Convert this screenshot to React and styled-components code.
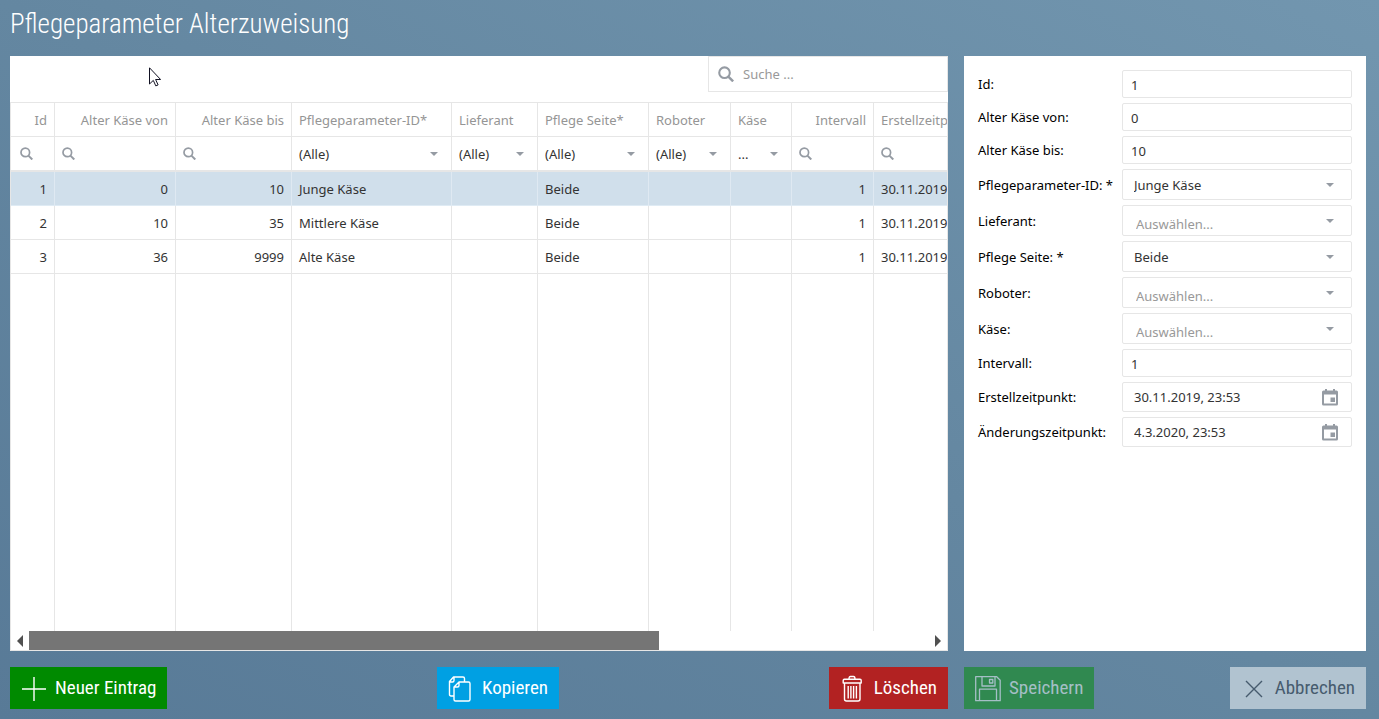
import React from 'react';
import styled, { createGlobalStyle, css } from 'styled-components';

const GlobalStyle = createGlobalStyle`
  *, *::before, *::after { box-sizing: border-box; }
  html, body { margin: 0; }
  body {
    font-family: 'Noto Sans', 'Open Sans', sans-serif;
    font-size: 13px;
    line-height: 18px;
    color: #333;
  }
  button, input, select { font: inherit; color: inherit; margin: 0; }
`;

const condensed = css`
  font-family: 'Roboto Condensed', 'Liberation Sans Narrow', Roboto, sans-serif;
`;

const Page = styled.div`
  min-height: 100vh;
  display: flex;
  flex-direction: column;
  padding: 0 13px 10px 10px;
  background: linear-gradient(to top right, #587a97, #6487a1 50%, #7296af);
`;

const Title = styled.h1`
  ${condensed}
  margin: 0;
  height: 56px;
  padding-top: 8px;
  font-size: 27px;
  line-height: 32px;
  font-weight: 300;
  color: #fff;
`;

const Columns = styled.main`
  flex: 1;
  display: grid;
  grid-template-columns: minmax(0, 7fr) minmax(0, 3fr);
  grid-template-rows: 1fr 42px;
  gap: 16px;
`;

const Panel = styled.section`
  background: #fff;
  display: flex;
  flex-direction: column;
  min-width: 0;
`;

const Toolbar = styled.div`
  height: 46px;
  display: flex;
  justify-content: flex-end;
  align-items: flex-start;
`;

const SearchBox = styled.label`
  display: flex;
  align-items: center;
  gap: 9px;
  width: 240px;
  height: 36px;
  padding: 0 9px;
  border: 1px solid #e6e6e6;
  color: #959ba3;
`;

const PlainInput = styled.input`
  flex: 1;
  min-width: 0;
  width: 100%;
  border: 0;
  padding: 0;
  outline: 0;
  background: transparent;
  &::placeholder { color: #999; opacity: 1; }
`;

const GridBox = styled.div`
  flex: 1;
  display: flex;
  flex-direction: column;
  border: 1px solid #e6e6e6;
`;

const TableClip = styled.div`
  flex: 1;
  display: grid;
  overflow: hidden;
`;

const Table = styled.table`
  width: 100%;
  height: 100%;
  table-layout: fixed;
  border-collapse: separate;
  border-spacing: 0;
`;

const Col = styled.col`
  width: ${(p) => (p.$w ? `${p.$w}px` : 'auto')};
`;

const Th = styled.th`
  height: 34px;
  padding: 0 7px;
  border-right: 1px solid #e6e6e6;
  border-bottom: 1px solid #e6e6e6;
  font-weight: 400;
  color: #959595;
  text-align: ${(p) => (p.$right ? 'right' : 'left')};
  white-space: nowrap;
  overflow: hidden;
  &:last-child { border-right: 0; }
`;

const FilterTd = styled.td`
  height: 35px;
  padding: 0 7px;
  border-right: 1px solid #e6e6e6;
  border-bottom: 2px solid #e6e6e6;
  &:first-child { padding-left: 9px; }
  &:last-child { border-right: 0; }
`;

const FilterBox = styled.div`
  display: flex;
  align-items: center;
  position: relative;
  color: #959ba3;
`;

const FilterSelect = styled.select`
  appearance: none;
  width: 100%;
  padding: 0 22px 0 0;
  border: 0;
  outline: 0;
  background: transparent;
  color: #333;
  text-overflow: ellipsis;
`;

const Td = styled.td`
  height: 34px;
  padding: 0 7px;
  border-right: 1px solid ${(p) => (p.$selected ? '#dfe9f2' : '#e6e6e6')};
  border-bottom: 1px solid ${(p) => (p.$selected ? '#dfebf4' : '#e6e6e6')};
  background: ${(p) => (p.$selected ? '#d0dfeb' : '#fff')};
  text-align: ${(p) => (p.$right ? 'right' : 'left')};
  white-space: nowrap;
  overflow: hidden;
  &:last-child { border-right: 0; }
`;

const FillTd = styled.td`
  padding: 0;
  border-right: 1px solid #e6e6e6;
  &:last-child { border-right: 0; }
`;

const Scrollbar = styled.div`
  display: flex;
  height: 19px;
  background: #fff;
`;

const ScrollArrow = styled.button`
  width: 18px;
  padding: 0;
  border: 0;
  background: transparent;
  color: #505050;
  display: flex;
  align-items: center;
  justify-content: center;
`;

const ScrollTrack = styled.div`
  flex: 1;
`;

const ScrollThumb = styled.div`
  width: 70%;
  height: 100%;
  background: #757575;
`;

const Form = styled.form`
  display: grid;
  grid-template-columns: 144px minmax(0, 1fr);
  row-gap: 5px;
  align-items: center;
  padding: 14px;
  color: #000;
`;

const Label = styled.label`
  white-space: nowrap;
`;

const TextField = styled.input`
  width: 100%;
  height: ${(p) => (p.$date ? 30 : 28)}px;
  padding: ${(p) => (p.$date ? '0 11px' : '2px 8px 0')};
  border: 1px solid #e6e6e6;
  border-radius: 2px;
  background: #fff;
  color: #333;
  outline: 0;
`;

const FieldWrap = styled.div`
  position: relative;
  display: flex;
`;

const SelectField = styled.select`
  appearance: none;
  width: 100%;
  height: 31px;
  padding: ${(p) => (p.$empty ? '6px 40px 0 13px' : '0 40px 0 11px')};
  border: 1px solid #e6e6e6;
  border-radius: 2px;
  background: #fff;
  color: ${(p) => (p.$empty ? '#999' : '#333')};
  outline: 0;
`;

const Overlay = styled.span`
  position: absolute;
  top: 0;
  bottom: 0;
  right: ${(p) => p.$right}px;
  display: flex;
  align-items: center;
  color: #959ba3;
  pointer-events: none;
`;

const ButtonRow = styled.div`
  display: flex;
  justify-content: space-between;
`;

const tones = {
  green: { bg: '#008a00', fg: '#fff' },
  blue: { bg: '#00a0e3', fg: '#fff' },
  red: { bg: '#b22222', fg: '#fff' },
  greenMuted: { bg: '#308950', fg: '#a5bfc6' },
  grey: { bg: '#b1c3d0', fg: '#465b6e' },
};

const ActionButton = styled.button`
  ${condensed}
  display: flex;
  align-items: center;
  gap: 8px;
  height: 42px;
  padding: 0 11px;
  border: 0;
  font-size: 19px;
  line-height: 24px;
  background: ${(p) => tones[p.$tone].bg};
  color: ${(p) => tones[p.$tone].fg};
`;

const Pointer = styled.svg`
  position: absolute;
  left: 149px;
  top: 67px;
  pointer-events: none;
`;

const SearchIcon = ({ size = 13 }) => (
  <svg width={size} height={size} viewBox="0 0 13 13" fill="none" stroke="currentColor" aria-hidden="true">
    <circle cx="5.3" cy="5.4" r="4.3" strokeWidth="1.7" />
    <path d="M8.4 8.600 12.300 12.500" strokeWidth="2" />
  </svg>
);

const Caret = () => (
  <svg width="8" height="4" viewBox="0 0 8 4" aria-hidden="true">
    <path d="M0 0h8L4 4z" fill="currentColor" />
  </svg>
);

const CalendarIcon = () => (
  <svg width="16" height="17" viewBox="0 0 16 17" aria-hidden="true">
    <path
      fill="currentColor"
      fillRule="evenodd"
      d="M3 0h2v1.500h6V0h2v1.500h1.500Q16 1.500 16 3v12q0 1.500-1.500 1.500h-13Q0 16.500 0 15V3Q0 1.500 1.500 1.500H3zM2 5.500v9h12v-9zM8.500 8.500h4.500v4.500H8.500z"
    />
  </svg>
);

const icons = {
  plus: <path d="M13 2v24M1 14h24" strokeWidth="1.400" />,
  copy: (
    <g strokeWidth="1.400">
      <path d="M6 21H3q-1.500 0-1.500-1.500V6.500l4-4.500H15q1.500 0 1.500 1.500V7M1.500 7h3q1.500 0 1.500-1.500V2" />
      <path d="M11 7h9.500q1.500 0 1.500 1.500v16q0 1.500-1.500 1.500h-13Q6 26 6 24.500V12zM6 12h3.500q1.500 0 1.500-1.500V7" />
    </g>
  ),
  trash: (
    <g strokeWidth="1.400">
      <path d="M4.500 4.200h15.500q1.200 0 1.200 1.200v2.600h-18V5.400q0-1.200 1.200-1.200zM9 4q0-2.500 1.500-2.500h3q1.500 0 1.500 2.500M4.500 8v16q0 2 2 2h11.500q2 0 2-2V8" />
      <path d="M8.200 11v12.500M10.900 11v12.500M13.600 11v12.500M16.400 11v12.500" />
    </g>
  ),
  save: (
    <g strokeWidth="1.300">
      <path d="M.7 1.700h21l3.500 3.500v20.500H.7zM7 1.700v9.300h13V1.700M4.500 25.700V14.200h17v11.500" />
      <path d="M14.500 4.500h3.300v3.500h-3.300z" />
    </g>
  ),
  close: <path d="M5 6 21 22M21 6 5 22" strokeWidth="1.400" />,
};

const ActionIcon = ({ name }) => (
  <svg width="26" height="27" viewBox="0 0 26 27" fill="none" stroke="currentColor" strokeLinejoin="round" aria-hidden="true">
    {icons[name]}
  </svg>
);

const columns = [
  { key: 'id', label: 'Id', width: 44, right: true },
  { key: 'from', label: 'Alter Käse von', width: 121, right: true },
  { key: 'to', label: 'Alter Käse bis', width: 116, right: true },
  { key: 'param', label: 'Pflegeparameter-ID*', width: 160, options: '(Alle)' },
  { key: 'supplier', label: 'Lieferant', width: 86, options: '(Alle)' },
  { key: 'side', label: 'Pflege Seite*', width: 111, options: '(Alle)' },
  { key: 'robot', label: 'Roboter', width: 82, options: '(Alle)' },
  { key: 'cheese', label: 'Käse', width: 61, options: '...' },
  { key: 'interval', label: 'Intervall', width: 82, right: true },
  { key: 'created', label: 'Erstellzeitpunkt' },
];

const rows = [
  { id: 1, from: 0, to: 10, param: 'Junge Käse', side: 'Beide', interval: 1, created: '30.11.2019, 23:53' },
  { id: 2, from: 10, to: 35, param: 'Mittlere Käse', side: 'Beide', interval: 1, created: '30.11.2019, 23:53' },
  { id: 3, from: 36, to: 9999, param: 'Alte Käse', side: 'Beide', interval: 1, created: '30.11.2019, 23:53' },
];

const fields = [
  { id: 'f-id', label: 'Id:', type: 'text', value: '1' },
  { id: 'f-from', label: 'Alter Käse von:', type: 'text', value: '0' },
  { id: 'f-to', label: 'Alter Käse bis:', type: 'text', value: '10' },
  { id: 'f-param', label: 'Pflegeparameter-ID: *', type: 'select', value: 'Junge Käse' },
  { id: 'f-supplier', label: 'Lieferant:', type: 'select' },
  { id: 'f-side', label: 'Pflege Seite: *', type: 'select', value: 'Beide' },
  { id: 'f-robot', label: 'Roboter:', type: 'select' },
  { id: 'f-cheese', label: 'Käse:', type: 'select' },
  { id: 'f-interval', label: 'Intervall:', type: 'text', value: '1' },
  { id: 'f-created', label: 'Erstellzeitpunkt:', type: 'date', value: '30.11.2019, 23:53' },
  { id: 'f-changed', label: 'Änderungszeitpunkt:', type: 'date', value: '4.3.2020, 23:53' },
];

const Field = ({ id, type, value }) => {
  if (type === 'select') {
    return (
      <FieldWrap>
        <SelectField id={id} $empty={!value}>
          <option>{value || 'Auswählen...'}</option>
        </SelectField>
        <Overlay $right={18}><Caret /></Overlay>
      </FieldWrap>
    );
  }
  return (
    <FieldWrap>
      <TextField id={id} $date={type === 'date'} defaultValue={value} />
      {type === 'date' && <Overlay $right={14}><CalendarIcon /></Overlay>}
    </FieldWrap>
  );
};

const Action = ({ tone, icon, children, ...rest }) => (
  <ActionButton type="button" $tone={tone} {...rest}>
    <ActionIcon name={icon} />
    {children}
  </ActionButton>
);

export default function App() {
  return (
    <Page>
      <GlobalStyle />
      <Title>Pflegeparameter Alterzuweisung</Title>
      <Columns>
        <Panel>
          <Toolbar>
            <SearchBox>
              <SearchIcon size={16} />
              <PlainInput placeholder="Suche ..." aria-label="Suche" />
            </SearchBox>
          </Toolbar>
          <GridBox>
            <TableClip>
              <Table>
                <colgroup>
                  {columns.map((c) => <Col key={c.key} $w={c.width} />)}
                </colgroup>
                <thead>
                  <tr>
                    {columns.map((c) => <Th key={c.key} $right={c.right}>{c.label}</Th>)}
                  </tr>
                </thead>
                <tbody>
                  <tr>
                    {columns.map((c) => (
                      <FilterTd key={c.key}>
                        <FilterBox>
                          {c.options ? (
                            <>
                              <FilterSelect aria-label={c.label}><option>{c.options}</option></FilterSelect>
                              <Overlay $right={6}><Caret /></Overlay>
                            </>
                          ) : (
                            <>
                              <SearchIcon />
                              <PlainInput aria-label={c.label} />
                            </>
                          )}
                        </FilterBox>
                      </FilterTd>
                    ))}
                  </tr>
                  {rows.map((r, i) => (
                    <tr key={r.id}>
                      {columns.map((c) => (
                        <Td key={c.key} $right={c.right} $selected={i === 0}>{r[c.key]}</Td>
                      ))}
                    </tr>
                  ))}
                  <tr aria-hidden="true">
                    {columns.map((c) => <FillTd key={c.key} />)}
                  </tr>
                </tbody>
              </Table>
            </TableClip>
            <Scrollbar>
              <ScrollArrow type="button" aria-label="Nach links">
                <svg width="6" height="12" viewBox="0 0 6 12"><path d="M6 0v12L0 6z" fill="currentColor" /></svg>
              </ScrollArrow>
              <ScrollTrack><ScrollThumb /></ScrollTrack>
              <ScrollArrow type="button" aria-label="Nach rechts">
                <svg width="6" height="12" viewBox="0 0 6 12"><path d="M0 0v12l6-6z" fill="currentColor" /></svg>
              </ScrollArrow>
            </Scrollbar>
          </GridBox>
        </Panel>
        <Panel>
          <Form>
            {fields.map((f) => (
              <React.Fragment key={f.id}>
                <Label htmlFor={f.id}>{f.label}</Label>
                <Field {...f} />
              </React.Fragment>
            ))}
          </Form>
        </Panel>
        <ButtonRow>
          <Action tone="green" icon="plus">Neuer Eintrag</Action>
          <Action tone="blue" icon="copy">Kopieren</Action>
          <Action tone="red" icon="trash">Löschen</Action>
        </ButtonRow>
        <ButtonRow>
          <Action tone="greenMuted" icon="save">Speichern</Action>
          <Action tone="grey" icon="close">Abbrechen</Action>
        </ButtonRow>
      </Columns>
      <Pointer width="12" height="20" viewBox="0 0 12 20" aria-hidden="true">
        <path d="M.5.8v16.200l3.800-3.600 2.500 5.500 2.300-1-2.500-5.400h5z" fill="#fff" stroke="#111122" />
      </Pointer>
    </Page>
  );
}
